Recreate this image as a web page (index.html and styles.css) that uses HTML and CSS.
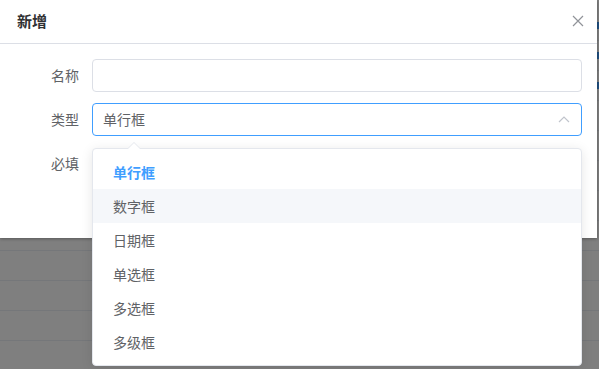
FILE: index.html
```html
<!DOCTYPE html>
<html lang="zh-CN">

<head>
    <meta charset="UTF-8">
    <meta name="viewport" content="width=device-width, initial-scale=1.0">
    <title>新增</title>
    <link rel="stylesheet" href="styles.css">
</head>

<body>
    <!-- page behind the mask -->
    <div class="page">
        <div class="row"><span class="link"></span></div>
        <div class="row"><span class="link"></span></div>
        <div class="row"><span class="link"></span></div>
        <div class="row"></div>
        <div class="row"></div>
        <div class="row"></div>
        <div class="row"></div>
        <div class="row"></div>
        <div class="row"></div>
        <div class="row"></div>
        <div class="row"></div>
        <div class="row"></div>
    </div>
    <div class="mask"></div>

    <div class="dialog">
        <div class="dialog-header">
            <span class="dialog-title">新增</span>
            <button type="button" class="close">
                <svg width="12" height="12" viewBox="0 0 12 12">
                    <path d="M1 1 L11 11 M11 1 L1 11" stroke="#909399" stroke-width="1.2" fill="none" />
                </svg>
            </button>
        </div>

        <form class="form">
            <div class="form-item">
                <label class="form-label">名称</label>
                <div class="form-control">
                    <input type="text" class="input">
                </div>
            </div>

            <div class="form-item">
                <label class="form-label">类型</label>
                <div class="form-control select">
                    <div class="input is-focus">
                        <span>单行框</span>
                        <svg class="caret" width="12" height="8" viewBox="0 0 12 8">
                            <path d="M1 7 L6 2 L11 7" stroke="#c0c4cc" stroke-width="1.2" fill="none" />
                        </svg>
                    </div>

                    <div class="dropdown">
                        <div class="arrow"></div>
                        <ul class="options">
                            <li class="option selected">单行框</li>
                            <li class="option hover">数字框</li>
                            <li class="option">日期框</li>
                            <li class="option">单选框</li>
                            <li class="option">多选框</li>
                            <li class="option">多级框</li>
                        </ul>
                    </div>
                </div>
            </div>

            <div class="form-item">
                <label class="form-label">必填</label>
                <div class="form-control"></div>
            </div>
        </form>
    </div>
</body>

</html>
```

FILE: styles.css
```css
* {
    box-sizing: border-box;
}

body {
    margin: 0;
    width: 599px;
    height: 369px;
    overflow: hidden;
    position: relative;
    font-family: "Noto Sans CJK SC", "Noto Sans", sans-serif;
    font-size: 14px;
    color: #606266;
    background: #ffffff;
}

.page {
    padding-top: 11px;
}

.row {
    height: 30px;
    border-bottom: 1px solid #ebeef5;
    position: relative;
}

.link {
    position: absolute;
    right: 0;
    top: 11px;
    width: 3px;
    height: 7px;
    background: #409eff;
}

.mask {
    position: absolute;
    inset: 0;
    background: rgba(0, 0, 0, 0.5);
}

.dialog {
    position: absolute;
    left: 0;
    top: 0;
    width: 597px;
    height: 238px;
    background: #ffffff;
    box-shadow: 0 1px 3px rgba(0, 0, 0, 0.3);
}

.dialog-header {
    height: 44px;
    border-bottom: 1px solid #dcdfe6;
    display: flex;
    align-items: center;
    justify-content: space-between;
    padding: 0 13px 2px 17px;
}

.dialog-title {
    font-size: 15px;
    font-weight: bold;
    color: #303133;
}

.close {
    border: none;
    background: none;
    padding: 0;
    display: flex;
    cursor: pointer;
}

.form {
    padding: 15px 15px 0 0;
}

.form-item {
    display: flex;
    align-items: center;
    height: 32px;
    margin-bottom: 12px;
}

.form-label {
    width: 79px;
    margin-right: 13px;
    text-align: right;
    color: #606266;
}

.form-control {
    flex: 1;
    position: relative;
}

.input {
    width: 100%;
    height: 33px;
    border: 1px solid #dcdfe6;
    border-radius: 4px;
    padding: 0 10px;
    font: inherit;
    color: #606266;
    outline: none;
    display: flex;
    align-items: center;
    justify-content: space-between;
}

.input.is-focus {
    border-color: #409eff;
}

.caret {
    margin-right: 1px;
}

.dropdown {
    position: absolute;
    left: 0;
    top: 45px;
    width: 100%;
    background: #ffffff;
    border: 1px solid #e4e7ed;
    border-radius: 4px;
    box-shadow: 0 2px 12px 0 rgba(0, 0, 0, 0.1);
    z-index: 2;
}

.arrow {
    position: absolute;
    top: -7px;
    left: 35px;
    width: 0;
    height: 0;
    border-left: 6px solid transparent;
    border-right: 6px solid transparent;
    border-bottom: 6px solid #e4e7ed;
}

.arrow::after {
    content: "";
    position: absolute;
    left: -6px;
    top: 1px;
    border-left: 6px solid transparent;
    border-right: 6px solid transparent;
    border-bottom: 6px solid #ffffff;
}

.options {
    list-style: none;
    margin: 0;
    padding: 6px 0;
}

.option {
    height: 34px;
    line-height: 34px;
    padding: 0 20px;
    color: #606266;
}

.option.selected {
    color: #409eff;
    font-weight: bold;
}

.option.hover {
    background: #f5f7fa;
}
```
